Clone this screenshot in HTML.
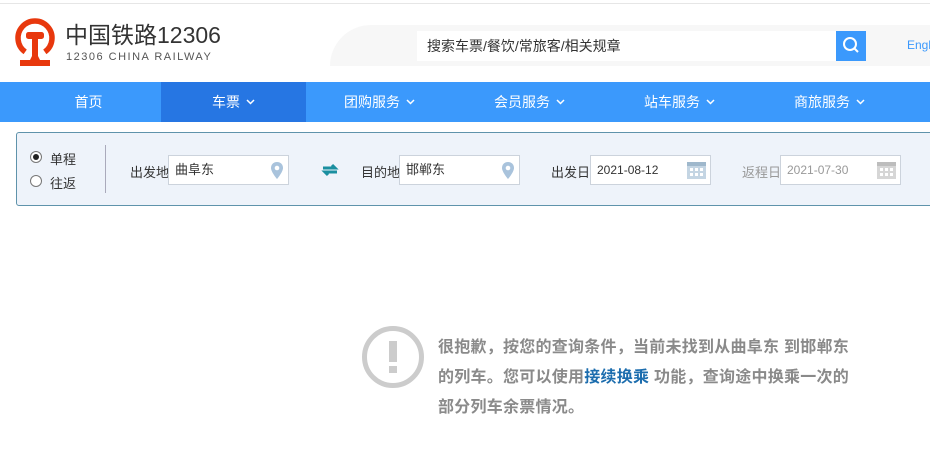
<!DOCTYPE html>
<html><head><meta charset="utf-8"><style>
*{margin:0;padding:0;box-sizing:border-box}
body{width:930px;height:454px;background:#fff;position:relative;overflow:hidden;font-family:"Liberation Sans","Noto Sans CJK SC",sans-serif;font-size:13px;color:#333}
.a{position:absolute}
.nav{top:82px;left:0;width:930px;height:40px;background:#3b99fc}
.ni{position:absolute;top:0;height:40px;line-height:40px;color:#fff;font-size:14px;text-align:center;width:145px}
.ni svg{vertical-align:middle;margin-left:6px;margin-top:-3px}
.inp{position:absolute;height:30px;background:#fff;border:1px solid #ccd3dc;line-height:28px;padding-left:6px;font-size:13px;top:155px}
.lbl{position:absolute;top:162px;font-size:13px}
</style></head><body>
<div class="a" style="top:3px;left:0;width:930px;height:1px;background:#e6e6e6"></div>
<!-- logo -->
<svg class="a" style="left:14px;top:16px" width="44" height="52" viewBox="0 0 44 52">
<path d="M11.2 35.9 A17 17 0 1 1 30.8 35.9" fill="none" stroke="#e8380d" stroke-width="5.5"/>
<rect x="12" y="16" width="18" height="7" rx="2.5" fill="#e8380d"/>
<path d="M18 22 H24 V40 L26.5 45 H15.5 L18 40Z" fill="#e8380d"/>
<rect x="6" y="44" width="30" height="6" fill="#e8380d"/>
</svg>
<div class="a" style="left:65px;top:19px;font-size:23px;color:#333;line-height:32px">中国铁路12306</div>
<div class="a" style="left:66px;top:51px;font-size:11px;color:#555;letter-spacing:1.5px;line-height:13px">12306 CHINA RAILWAY</div>
<!-- search band -->
<div class="a" style="left:330px;top:25px;width:600px;height:41px;background:#f7f7f7;border-radius:45px 0 0 0"></div>
<div class="a" style="left:417px;top:31px;width:419px;height:30px;background:#fff;line-height:30px;padding-left:10px;font-size:14px;color:#333">搜索车票/餐饮/常旅客/相关规章</div>
<div class="a" style="left:836px;top:31px;width:30px;height:30px;background:#3b99fc">
<svg width="30" height="30"><circle cx="14" cy="13" r="6" fill="none" stroke="#fff" stroke-width="2"/><path d="M18.5 17.5 L22 21" stroke="#fff" stroke-width="2"/></svg></div>
<div class="a" style="left:907px;top:38px;font-size:12px;color:#3b99fc">Engl</div>
<!-- nav -->
<div class="a nav">
<div class="ni" style="left:16px">首页</div>
<div class="ni" style="left:161px;background:#2676e3">车票<svg width="9" height="6"><path d="M1 1 L4.5 4.5 L8 1" fill="none" stroke="#fff" stroke-width="1.5"/></svg></div>
<div class="ni" style="left:307px">团购服务<svg width="9" height="6"><path d="M1 1 L4.5 4.5 L8 1" fill="none" stroke="#fff" stroke-width="1.5"/></svg></div>
<div class="ni" style="left:457px">会员服务<svg width="9" height="6"><path d="M1 1 L4.5 4.5 L8 1" fill="none" stroke="#fff" stroke-width="1.5"/></svg></div>
<div class="ni" style="left:607px">站车服务<svg width="9" height="6"><path d="M1 1 L4.5 4.5 L8 1" fill="none" stroke="#fff" stroke-width="1.5"/></svg></div>
<div class="ni" style="left:757px">商旅服务<svg width="9" height="6"><path d="M1 1 L4.5 4.5 L8 1" fill="none" stroke="#fff" stroke-width="1.5"/></svg></div>
</div>
<!-- form -->
<div class="a" style="left:16px;top:132px;width:920px;height:74px;background:#eef3fa;border:1px solid #5f93ab;border-radius:3px"></div>
<svg class="a" style="left:29px;top:150px" width="14" height="40"><circle cx="7" cy="7" r="5.5" fill="#fff" stroke="#777"/><circle cx="7" cy="7" r="3" fill="#222"/><circle cx="7" cy="31" r="5.5" fill="#fff" stroke="#777"/></svg>
<div class="a" style="left:50px;top:149px;font-size:13px">单程</div>
<div class="a" style="left:50px;top:173px;font-size:13px">往返</div>
<div class="a" style="left:105px;top:145px;width:1px;height:48px;background:#aab"></div>
<div class="lbl" style="left:130px">出发地</div>
<div class="inp" style="left:168px;width:121px">曲阜东
<svg class="a" style="right:4px;top:5px" width="14" height="19"><path d="M7 1 C3 1 1 4 1 7 C1 11 7 18 7 18 C7 18 13 11 13 7 C13 4 11 1 7 1Z" fill="#a9c3dc"/><circle cx="7" cy="7" r="2.3" fill="#fff"/></svg></div>
<svg class="a" style="left:321px;top:163px" width="18" height="14"><path d="M2 5 H14 L11 2 M16 9 H4 L7 12" fill="none" stroke="#1a8fa0" stroke-width="3"/></svg>
<div class="lbl" style="left:361px">目的地</div>
<div class="inp" style="left:399px;width:121px">邯郸东
<svg class="a" style="right:4px;top:5px" width="14" height="19"><path d="M7 1 C3 1 1 4 1 7 C1 11 7 18 7 18 C7 18 13 11 13 7 C13 4 11 1 7 1Z" fill="#a9c3dc"/><circle cx="7" cy="7" r="2.3" fill="#fff"/></svg></div>
<div class="lbl" style="left:551px">出发日</div>
<div class="inp" style="left:590px;width:121px;font-size:12px">2021-08-12
<svg class="a" style="right:3px;top:3px" width="21" height="22"><rect x="1" y="3" width="19" height="17" fill="#c4d5e3"/><rect x="1" y="3" width="19" height="4" fill="#9fb8cc"/><g fill="#fff"><rect x="4" y="9" width="3" height="3"/><rect x="9" y="9" width="3" height="3"/><rect x="14" y="9" width="3" height="3"/><rect x="4" y="14" width="3" height="3"/><rect x="9" y="14" width="3" height="3"/><rect x="14" y="14" width="3" height="3"/></g></svg></div>
<div class="lbl" style="left:742px;color:#999">返程日</div>
<div class="inp" style="left:780px;width:121px;font-size:12px;color:#999">2021-07-30
<svg class="a" style="right:3px;top:3px" width="21" height="22"><rect x="1" y="3" width="19" height="17" fill="#d6d6d6"/><rect x="1" y="3" width="19" height="4" fill="#bdbdbd"/><g fill="#fff"><rect x="4" y="9" width="3" height="3"/><rect x="9" y="9" width="3" height="3"/><rect x="14" y="9" width="3" height="3"/><rect x="4" y="14" width="3" height="3"/><rect x="9" y="14" width="3" height="3"/><rect x="14" y="14" width="3" height="3"/></g></svg></div>
<!-- message -->
<svg class="a" style="left:361px;top:325px" width="64" height="64"><circle cx="32" cy="32" r="28.5" fill="none" stroke="#ccc" stroke-width="5"/><rect x="28" y="16" width="8" height="21" fill="#ccc"/><rect x="28" y="41" width="8" height="7" fill="#ccc"/></svg>
<div class="a" style="left:438px;top:333px;width:440px;font-size:16px;line-height:30px;color:#8a8a8a;font-weight:bold;letter-spacing:0.25px">很抱歉，按您的查询条件，当前未找到从曲阜东 到邯郸东<br>的列车。您可以使用<span style="color:#1c6dae">接续换乘</span> 功能，查询途中换乘一次的<br>部分列车余票情况。</div>
</body></html>
